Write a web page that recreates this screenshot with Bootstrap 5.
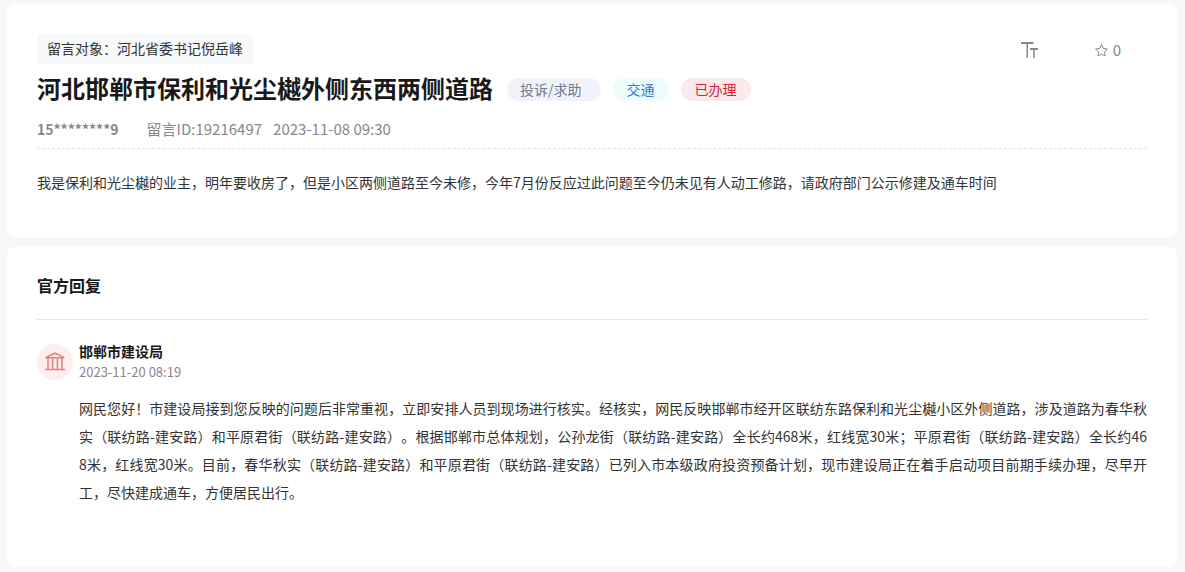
<!DOCTYPE html>
<html lang="zh-CN">
<head>
<meta charset="utf-8">
<meta name="viewport" content="width=device-width, initial-scale=1">
<title>河北邯郸市保利和光尘樾外侧东西两侧道路</title>
<link href="https://cdn.jsdelivr.net/npm/bootstrap@5.3.0/dist/css/bootstrap.min.css" rel="stylesheet">
<style>
  body { background: #f7f8fa; color: #333; font-family: "Noto Sans CJK SC", sans-serif; font-size: 14px; line-height: 28px; text-spacing-trim: space-all; }
  .page { padding: 4px 8px 5px 7px; gap: 10px; }
  .panel { background: #fff; border-radius: 8px; padding: 30px; }
  .panel-message { padding-bottom: 41px; }
  .panel-reply { padding-top: 22px; padding-bottom: 61px; }
  .target { background: #f7f8fa; border-radius: 2px; padding: 0 10px 2px; }
  .tools { gap: 56px; padding: 2px 26px 0 0; color: #888; font-size: 15px; }
  .tool { background: none; border: 0; padding: 0; color: inherit; line-height: inherit; }
  .headline { font-size: 24px; line-height: 32px; font-weight: 700; color: #191919; margin: 0 2px 0 0; padding-bottom: 2px; }
  .title-row { gap: 12px; margin-top: 8px; }
  .tag { border-radius: 12px; line-height: 23px; padding: 0 14px; }
  .tag-kind { background: #f0f4fa; color: #6d7b8f; padding-right: 19px; padding-left: 13px; }
  .tag-field { background: #ecfdfb; color: #3a77c9; }
  .tag-state { background: #faeaeb; color: #d9213b; }
  .meta { font-size: 15px; line-height: 24px; color: #888; margin-top: 11px; padding-bottom: 7px; border-bottom: 1px dashed #e2e2e2; }
  .user { font-size: 14px; margin-right: 28px; }
  .stamp { margin-left: 11px; }
  .message { margin: 19px 0 0; }
  .section-title { font-size: 16px; line-height: 32px; font-weight: 700; color: #191919; margin: 0; padding-bottom: 18px; border-bottom: 1px solid #e5e5e5; }
  .reply { gap: 6px; margin-top: 21px; }
  .avatar { width: 36px; height: 36px; background: #feeeee; margin-top: 3px; }
  .agency { font-size: 14px; line-height: 21px; font-weight: 700; color: #191919; margin: 0; }
  .reply-time { font-size: 13px; line-height: 20px; color: #888; }
  .reply-text { margin: 12px 0 0; text-align: justify; word-break: break-all; font-kerning: none; }
</style>
</head>
<body>
<main class="page d-flex flex-column">
  <article class="panel panel-message">
    <div class="d-flex justify-content-between align-items-start">
      <div class="target">留言对象：河北省委书记倪岳峰</div>
      <div class="tools d-flex align-items-center">
        <button type="button" class="tool d-flex align-items-center" aria-label="字号">
          <svg width="18" height="17" viewBox="0 0 18 17" fill="none" stroke="#888"><path stroke-width="2" d="M0 1h12.500M9 7h8"/><path stroke-width="1.500" d="M6.200 1v15M13 7v9"/></svg>
        </button>
        <button type="button" class="tool d-flex align-items-center gap-1">
          <svg width="14" height="14" viewBox="0 0 14 14" fill="none" stroke="#888" stroke-linejoin="round"><path d="M6.500 1.700l1.800 3.700 4.100.6-3 2.900.7 4.100L6.500 11.100l-3.600 1.900.7-4.100-3-2.900 4.100-.6z"/></svg>
          <span>0</span>
        </button>
      </div>
    </div>
    <div class="title-row d-flex flex-wrap align-items-center">
      <h1 class="headline">河北邯郸市保利和光尘樾外侧东西两侧道路</h1>
      <span class="tag tag-kind">投诉/求助</span>
      <span class="tag tag-field">交通</span>
      <span class="tag tag-state">已办理</span>
    </div>
    <div class="meta d-flex flex-wrap">
      <span class="user fw-bold">15********9</span>
      <span>留言ID:19216497</span>
      <span class="stamp">2023-11-08 09:30</span>
    </div>
    <p class="message">我是保利和光尘樾的业主，明年要收房了，但是小区两侧道路至今未修，今年7月份反应过此问题至今仍未见有人动工修路，请政府部门公示修建及通车时间</p>
  </article>

  <section class="panel panel-reply">
    <h2 class="section-title">官方回复</h2>
    <div class="reply d-flex align-items-start">
      <div class="avatar rounded-circle d-flex flex-shrink-0 align-items-center justify-content-center">
        <svg width="20" height="20" viewBox="0 0 20 20" fill="none" stroke="#e6807b" stroke-width="1.500"><path d="M0 17.500h20M.5 5.700h19M1 5.400L10 1.200l9 4.200M3 6v11.500M7.600 6v11.500M12.400 6v11.500M17 6v11.500"/></svg>
      </div>
      <div class="flex-grow-1">
        <h3 class="agency">邯郸市建设局</h3>
        <div class="reply-time">2023-11-20 08:19</div>
        <p class="reply-text">网民您好！市建设局接到您反映的问题后非常重视，立即安排人员到现场进行核实。经核实，网民反映邯郸市经开区联纺东路保利和光尘樾小区外侧道路，涉及道路为春华秋实（联纺路-建安路）和平原君街（联纺路-建安路）。根据邯郸市总体规划，公孙龙街（联纺路-建安路）全长约468米，红线宽30米；平原君街（联纺路-建安路）全长约46<span class="text-nowrap">8米</span>，红线宽30米。目前，春华秋实（联纺路-建安路）和平原君街（联纺路-建安路）已列入市本级政府投资预备计划，现市建设局正在着手启动项目前期手续办理，尽早开工，尽快建成通车，方便居民出行。</p>
      </div>
    </div>
  </section>
</main>
<script src="https://cdn.jsdelivr.net/npm/bootstrap@5.3.0/dist/js/bootstrap.bundle.min.js"></script>
</body>
</html>
